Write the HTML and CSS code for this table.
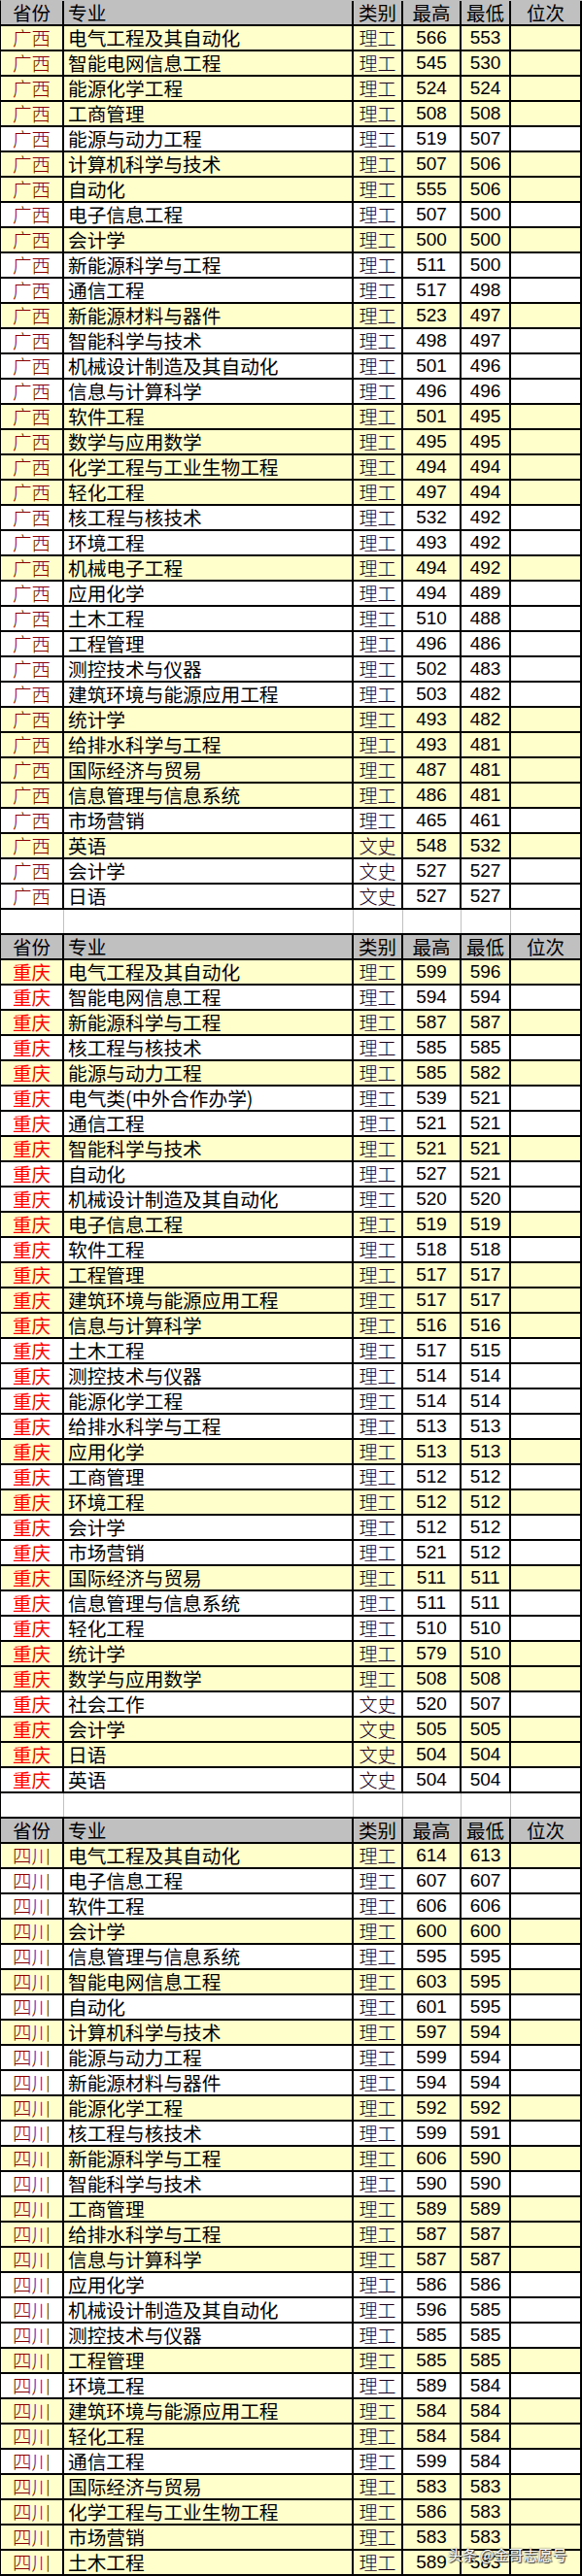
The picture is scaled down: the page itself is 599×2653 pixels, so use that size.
FILE: index.html
```html
<!DOCTYPE html>
<html lang="zh-CN">
<head>
<meta charset="utf-8">
<title>录取分数</title>
<link rel="stylesheet" href="styles.css">
</head>
<body>
<div class="sheet">
<div class="r h"><span class="c">省份</span><span class="m">专业</span><span class="c">类别</span><span class="c">最高</span><span class="c">最低</span><span class="c">位次</span></div>
<div class="r y"><span class="p gx">广西</span><span class="m">电气工程及其自动化</span><span class="t">理工</span><span class="n">566</span><span class="n">553</span><span class="n"></span></div>
<div class="r y"><span class="p gx">广西</span><span class="m">智能电网信息工程</span><span class="t">理工</span><span class="n">545</span><span class="n">530</span><span class="n"></span></div>
<div class="r y"><span class="p gx">广西</span><span class="m">能源化学工程</span><span class="t">理工</span><span class="n">524</span><span class="n">524</span><span class="n"></span></div>
<div class="r y"><span class="p gx">广西</span><span class="m">工商管理</span><span class="t">理工</span><span class="n">508</span><span class="n">508</span><span class="n"></span></div>
<div class="r"><span class="p gx">广西</span><span class="m">能源与动力工程</span><span class="t">理工</span><span class="n">519</span><span class="n">507</span><span class="n"></span></div>
<div class="r y"><span class="p gx">广西</span><span class="m">计算机科学与技术</span><span class="t">理工</span><span class="n">507</span><span class="n">506</span><span class="n"></span></div>
<div class="r y"><span class="p gx">广西</span><span class="m">自动化</span><span class="t">理工</span><span class="n">555</span><span class="n">506</span><span class="n"></span></div>
<div class="r"><span class="p gx">广西</span><span class="m">电子信息工程</span><span class="t">理工</span><span class="n">507</span><span class="n">500</span><span class="n"></span></div>
<div class="r y"><span class="p gx">广西</span><span class="m">会计学</span><span class="t">理工</span><span class="n">500</span><span class="n">500</span><span class="n"></span></div>
<div class="r"><span class="p gx">广西</span><span class="m">新能源科学与工程</span><span class="t">理工</span><span class="n">511</span><span class="n">500</span><span class="n"></span></div>
<div class="r"><span class="p gx">广西</span><span class="m">通信工程</span><span class="t">理工</span><span class="n">517</span><span class="n">498</span><span class="n"></span></div>
<div class="r y"><span class="p gx">广西</span><span class="m">新能源材料与器件</span><span class="t">理工</span><span class="n">523</span><span class="n">497</span><span class="n"></span></div>
<div class="r"><span class="p gx">广西</span><span class="m">智能科学与技术</span><span class="t">理工</span><span class="n">498</span><span class="n">497</span><span class="n"></span></div>
<div class="r"><span class="p gx">广西</span><span class="m">机械设计制造及其自动化</span><span class="t">理工</span><span class="n">501</span><span class="n">496</span><span class="n"></span></div>
<div class="r"><span class="p gx">广西</span><span class="m">信息与计算科学</span><span class="t">理工</span><span class="n">496</span><span class="n">496</span><span class="n"></span></div>
<div class="r y"><span class="p gx">广西</span><span class="m">软件工程</span><span class="t">理工</span><span class="n">501</span><span class="n">495</span><span class="n"></span></div>
<div class="r y"><span class="p gx">广西</span><span class="m">数学与应用数学</span><span class="t">理工</span><span class="n">495</span><span class="n">495</span><span class="n"></span></div>
<div class="r y"><span class="p gx">广西</span><span class="m">化学工程与工业生物工程</span><span class="t">理工</span><span class="n">494</span><span class="n">494</span><span class="n"></span></div>
<div class="r y"><span class="p gx">广西</span><span class="m">轻化工程</span><span class="t">理工</span><span class="n">497</span><span class="n">494</span><span class="n"></span></div>
<div class="r"><span class="p gx">广西</span><span class="m">核工程与核技术</span><span class="t">理工</span><span class="n">532</span><span class="n">492</span><span class="n"></span></div>
<div class="r"><span class="p gx">广西</span><span class="m">环境工程</span><span class="t">理工</span><span class="n">493</span><span class="n">492</span><span class="n"></span></div>
<div class="r y"><span class="p gx">广西</span><span class="m">机械电子工程</span><span class="t">理工</span><span class="n">494</span><span class="n">492</span><span class="n"></span></div>
<div class="r"><span class="p gx">广西</span><span class="m">应用化学</span><span class="t">理工</span><span class="n">494</span><span class="n">489</span><span class="n"></span></div>
<div class="r"><span class="p gx">广西</span><span class="m">土木工程</span><span class="t">理工</span><span class="n">510</span><span class="n">488</span><span class="n"></span></div>
<div class="r"><span class="p gx">广西</span><span class="m">工程管理</span><span class="t">理工</span><span class="n">496</span><span class="n">486</span><span class="n"></span></div>
<div class="r"><span class="p gx">广西</span><span class="m">测控技术与仪器</span><span class="t">理工</span><span class="n">502</span><span class="n">483</span><span class="n"></span></div>
<div class="r"><span class="p gx">广西</span><span class="m">建筑环境与能源应用工程</span><span class="t">理工</span><span class="n">503</span><span class="n">482</span><span class="n"></span></div>
<div class="r y"><span class="p gx">广西</span><span class="m">统计学</span><span class="t">理工</span><span class="n">493</span><span class="n">482</span><span class="n"></span></div>
<div class="r y"><span class="p gx">广西</span><span class="m">给排水科学与工程</span><span class="t">理工</span><span class="n">493</span><span class="n">481</span><span class="n"></span></div>
<div class="r y"><span class="p gx">广西</span><span class="m">国际经济与贸易</span><span class="t">理工</span><span class="n">487</span><span class="n">481</span><span class="n"></span></div>
<div class="r y"><span class="p gx">广西</span><span class="m">信息管理与信息系统</span><span class="t">理工</span><span class="n">486</span><span class="n">481</span><span class="n"></span></div>
<div class="r"><span class="p gx">广西</span><span class="m">市场营销</span><span class="t">理工</span><span class="n">465</span><span class="n">461</span><span class="n"></span></div>
<div class="r y"><span class="p gx">广西</span><span class="m">英语</span><span class="t">文史</span><span class="n">548</span><span class="n">532</span><span class="n"></span></div>
<div class="r"><span class="p gx">广西</span><span class="m">会计学</span><span class="t">文史</span><span class="n">527</span><span class="n">527</span><span class="n"></span></div>
<div class="r"><span class="p gx">广西</span><span class="m">日语</span><span class="t">文史</span><span class="n">527</span><span class="n">527</span><span class="n"></span></div>
<div class="r b"><span></span><span></span><span></span><span></span><span></span><span></span></div>
<div class="r h"><span class="c">省份</span><span class="m">专业</span><span class="c">类别</span><span class="c">最高</span><span class="c">最低</span><span class="c">位次</span></div>
<div class="r y"><span class="p cq">重庆</span><span class="m">电气工程及其自动化</span><span class="t">理工</span><span class="n">599</span><span class="n">596</span><span class="n"></span></div>
<div class="r"><span class="p cq">重庆</span><span class="m">智能电网信息工程</span><span class="t">理工</span><span class="n">594</span><span class="n">594</span><span class="n"></span></div>
<div class="r y"><span class="p cq">重庆</span><span class="m">新能源科学与工程</span><span class="t">理工</span><span class="n">587</span><span class="n">587</span><span class="n"></span></div>
<div class="r"><span class="p cq">重庆</span><span class="m">核工程与核技术</span><span class="t">理工</span><span class="n">585</span><span class="n">585</span><span class="n"></span></div>
<div class="r y"><span class="p cq">重庆</span><span class="m">能源与动力工程</span><span class="t">理工</span><span class="n">585</span><span class="n">582</span><span class="n"></span></div>
<div class="r"><span class="p cq">重庆</span><span class="m">电气类(中外合作办学)</span><span class="t">理工</span><span class="n">539</span><span class="n">521</span><span class="n"></span></div>
<div class="r"><span class="p cq">重庆</span><span class="m">通信工程</span><span class="t">理工</span><span class="n">521</span><span class="n">521</span><span class="n"></span></div>
<div class="r y"><span class="p cq">重庆</span><span class="m">智能科学与技术</span><span class="t">理工</span><span class="n">521</span><span class="n">521</span><span class="n"></span></div>
<div class="r"><span class="p cq">重庆</span><span class="m">自动化</span><span class="t">理工</span><span class="n">527</span><span class="n">521</span><span class="n"></span></div>
<div class="r"><span class="p cq">重庆</span><span class="m">机械设计制造及其自动化</span><span class="t">理工</span><span class="n">520</span><span class="n">520</span><span class="n"></span></div>
<div class="r y"><span class="p cq">重庆</span><span class="m">电子信息工程</span><span class="t">理工</span><span class="n">519</span><span class="n">519</span><span class="n"></span></div>
<div class="r"><span class="p cq">重庆</span><span class="m">软件工程</span><span class="t">理工</span><span class="n">518</span><span class="n">518</span><span class="n"></span></div>
<div class="r y"><span class="p cq">重庆</span><span class="m">工程管理</span><span class="t">理工</span><span class="n">517</span><span class="n">517</span><span class="n"></span></div>
<div class="r y"><span class="p cq">重庆</span><span class="m">建筑环境与能源应用工程</span><span class="t">理工</span><span class="n">517</span><span class="n">517</span><span class="n"></span></div>
<div class="r y"><span class="p cq">重庆</span><span class="m">信息与计算科学</span><span class="t">理工</span><span class="n">516</span><span class="n">516</span><span class="n"></span></div>
<div class="r"><span class="p cq">重庆</span><span class="m">土木工程</span><span class="t">理工</span><span class="n">517</span><span class="n">515</span><span class="n"></span></div>
<div class="r"><span class="p cq">重庆</span><span class="m">测控技术与仪器</span><span class="t">理工</span><span class="n">514</span><span class="n">514</span><span class="n"></span></div>
<div class="r"><span class="p cq">重庆</span><span class="m">能源化学工程</span><span class="t">理工</span><span class="n">514</span><span class="n">514</span><span class="n"></span></div>
<div class="r"><span class="p cq">重庆</span><span class="m">给排水科学与工程</span><span class="t">理工</span><span class="n">513</span><span class="n">513</span><span class="n"></span></div>
<div class="r y"><span class="p cq">重庆</span><span class="m">应用化学</span><span class="t">理工</span><span class="n">513</span><span class="n">513</span><span class="n"></span></div>
<div class="r"><span class="p cq">重庆</span><span class="m">工商管理</span><span class="t">理工</span><span class="n">512</span><span class="n">512</span><span class="n"></span></div>
<div class="r y"><span class="p cq">重庆</span><span class="m">环境工程</span><span class="t">理工</span><span class="n">512</span><span class="n">512</span><span class="n"></span></div>
<div class="r"><span class="p cq">重庆</span><span class="m">会计学</span><span class="t">理工</span><span class="n">512</span><span class="n">512</span><span class="n"></span></div>
<div class="r"><span class="p cq">重庆</span><span class="m">市场营销</span><span class="t">理工</span><span class="n">521</span><span class="n">512</span><span class="n"></span></div>
<div class="r y"><span class="p cq">重庆</span><span class="m">国际经济与贸易</span><span class="t">理工</span><span class="n">511</span><span class="n">511</span><span class="n"></span></div>
<div class="r"><span class="p cq">重庆</span><span class="m">信息管理与信息系统</span><span class="t">理工</span><span class="n">511</span><span class="n">511</span><span class="n"></span></div>
<div class="r"><span class="p cq">重庆</span><span class="m">轻化工程</span><span class="t">理工</span><span class="n">510</span><span class="n">510</span><span class="n"></span></div>
<div class="r y"><span class="p cq">重庆</span><span class="m">统计学</span><span class="t">理工</span><span class="n">579</span><span class="n">510</span><span class="n"></span></div>
<div class="r y"><span class="p cq">重庆</span><span class="m">数学与应用数学</span><span class="t">理工</span><span class="n">508</span><span class="n">508</span><span class="n"></span></div>
<div class="r"><span class="p cq">重庆</span><span class="m">社会工作</span><span class="t">文史</span><span class="n">520</span><span class="n">507</span><span class="n"></span></div>
<div class="r y"><span class="p cq">重庆</span><span class="m">会计学</span><span class="t">文史</span><span class="n">505</span><span class="n">505</span><span class="n"></span></div>
<div class="r y"><span class="p cq">重庆</span><span class="m">日语</span><span class="t">文史</span><span class="n">504</span><span class="n">504</span><span class="n"></span></div>
<div class="r"><span class="p cq">重庆</span><span class="m">英语</span><span class="t">文史</span><span class="n">504</span><span class="n">504</span><span class="n"></span></div>
<div class="r b"><span></span><span></span><span></span><span></span><span></span><span></span></div>
<div class="r h"><span class="c">省份</span><span class="m">专业</span><span class="c">类别</span><span class="c">最高</span><span class="c">最低</span><span class="c">位次</span></div>
<div class="r y"><span class="p sc">四川</span><span class="m">电气工程及其自动化</span><span class="t">理工</span><span class="n">614</span><span class="n">613</span><span class="n"></span></div>
<div class="r"><span class="p sc">四川</span><span class="m">电子信息工程</span><span class="t">理工</span><span class="n">607</span><span class="n">607</span><span class="n"></span></div>
<div class="r"><span class="p sc">四川</span><span class="m">软件工程</span><span class="t">理工</span><span class="n">606</span><span class="n">606</span><span class="n"></span></div>
<div class="r y"><span class="p sc">四川</span><span class="m">会计学</span><span class="t">理工</span><span class="n">600</span><span class="n">600</span><span class="n"></span></div>
<div class="r"><span class="p sc">四川</span><span class="m">信息管理与信息系统</span><span class="t">理工</span><span class="n">595</span><span class="n">595</span><span class="n"></span></div>
<div class="r y"><span class="p sc">四川</span><span class="m">智能电网信息工程</span><span class="t">理工</span><span class="n">603</span><span class="n">595</span><span class="n"></span></div>
<div class="r"><span class="p sc">四川</span><span class="m">自动化</span><span class="t">理工</span><span class="n">601</span><span class="n">595</span><span class="n"></span></div>
<div class="r y"><span class="p sc">四川</span><span class="m">计算机科学与技术</span><span class="t">理工</span><span class="n">597</span><span class="n">594</span><span class="n"></span></div>
<div class="r"><span class="p sc">四川</span><span class="m">能源与动力工程</span><span class="t">理工</span><span class="n">599</span><span class="n">594</span><span class="n"></span></div>
<div class="r"><span class="p sc">四川</span><span class="m">新能源材料与器件</span><span class="t">理工</span><span class="n">594</span><span class="n">594</span><span class="n"></span></div>
<div class="r y"><span class="p sc">四川</span><span class="m">能源化学工程</span><span class="t">理工</span><span class="n">592</span><span class="n">592</span><span class="n"></span></div>
<div class="r"><span class="p sc">四川</span><span class="m">核工程与核技术</span><span class="t">理工</span><span class="n">599</span><span class="n">591</span><span class="n"></span></div>
<div class="r y"><span class="p sc">四川</span><span class="m">新能源科学与工程</span><span class="t">理工</span><span class="n">606</span><span class="n">590</span><span class="n"></span></div>
<div class="r"><span class="p sc">四川</span><span class="m">智能科学与技术</span><span class="t">理工</span><span class="n">590</span><span class="n">590</span><span class="n"></span></div>
<div class="r y"><span class="p sc">四川</span><span class="m">工商管理</span><span class="t">理工</span><span class="n">589</span><span class="n">589</span><span class="n"></span></div>
<div class="r y"><span class="p sc">四川</span><span class="m">给排水科学与工程</span><span class="t">理工</span><span class="n">587</span><span class="n">587</span><span class="n"></span></div>
<div class="r y"><span class="p sc">四川</span><span class="m">信息与计算科学</span><span class="t">理工</span><span class="n">587</span><span class="n">587</span><span class="n"></span></div>
<div class="r"><span class="p sc">四川</span><span class="m">应用化学</span><span class="t">理工</span><span class="n">586</span><span class="n">586</span><span class="n"></span></div>
<div class="r"><span class="p sc">四川</span><span class="m">机械设计制造及其自动化</span><span class="t">理工</span><span class="n">596</span><span class="n">585</span><span class="n"></span></div>
<div class="r"><span class="p sc">四川</span><span class="m">测控技术与仪器</span><span class="t">理工</span><span class="n">585</span><span class="n">585</span><span class="n"></span></div>
<div class="r y"><span class="p sc">四川</span><span class="m">工程管理</span><span class="t">理工</span><span class="n">585</span><span class="n">585</span><span class="n"></span></div>
<div class="r"><span class="p sc">四川</span><span class="m">环境工程</span><span class="t">理工</span><span class="n">589</span><span class="n">584</span><span class="n"></span></div>
<div class="r y"><span class="p sc">四川</span><span class="m">建筑环境与能源应用工程</span><span class="t">理工</span><span class="n">584</span><span class="n">584</span><span class="n"></span></div>
<div class="r y"><span class="p sc">四川</span><span class="m">轻化工程</span><span class="t">理工</span><span class="n">584</span><span class="n">584</span><span class="n"></span></div>
<div class="r"><span class="p sc">四川</span><span class="m">通信工程</span><span class="t">理工</span><span class="n">599</span><span class="n">584</span><span class="n"></span></div>
<div class="r y"><span class="p sc">四川</span><span class="m">国际经济与贸易</span><span class="t">理工</span><span class="n">583</span><span class="n">583</span><span class="n"></span></div>
<div class="r y"><span class="p sc">四川</span><span class="m">化学工程与工业生物工程</span><span class="t">理工</span><span class="n">586</span><span class="n">583</span><span class="n"></span></div>
<div class="r y"><span class="p sc">四川</span><span class="m">市场营销</span><span class="t">理工</span><span class="n">583</span><span class="n">583</span><span class="n"></span></div>
<div class="r y"><span class="p sc">四川</span><span class="m">土木工程</span><span class="t">理工</span><span class="n">589</span><span class="n">583</span><span class="n"></span></div>
<div class="mark">头条 @金哥志愿号</div>
</div>
</body>
</html>
```
FILE: styles.css
```css
html, body {
  margin: 0;
  padding: 0;
  background: #ffffff;
}

.sheet {
  position: relative;
  width: 599px;
  box-sizing: border-box;
  border-top: 1px solid #c0c0c0;
  border-left: 1px solid #000000;
  font-family: "Noto Sans CJK SC", "Liberation Sans", sans-serif;
  color: #000000;
}

.r {
  display: grid;
  grid-template-columns: 65px 298px 51px 60px 51px 73px;
  height: 26px;
  box-sizing: border-box;
  border-bottom: 2px solid #000000;
  background: #ffffff;
}

.r.y {
  background: #ffffcc;
}

.r.h {
  background: #c0c0c0;
}

.r > span {
  box-sizing: border-box;
  border-right: 2px solid #000000;
  height: 24px;
  line-height: 24px;
  white-space: nowrap;
}

.r.b > span {
  border-right: 1px solid #c0c0c0;
}

.r.b > span:last-child {
  border-right: 2px solid #000000;
}

.c {
  text-align: center;
  font-size: 19.5px;
}

.m {
  padding-left: 4px;
  font-size: 19.7px;
}

.p {
  text-align: center;
  font-size: 19.5px;
  font-weight: 300;
}

.gx, .sc {
  color: #8a0000;
}

.cq {
  color: #ff0000;
  font-weight: 400;
}

.t {
  text-align: center;
  font-size: 19px;
  font-weight: 300;
  color: #1c001c;
}

.n {
  text-align: center;
  font-family: "Liberation Sans", Arial, sans-serif;
  font-size: 19px;
}

.mark {
  position: absolute;
  left: 460px;
  top: 2621px;
  font-size: 15px;
  line-height: 18px;
  color: #ffffff;
  white-space: nowrap;
  text-shadow: 0 0 2px #333333, 1px 1px 1px #333333;
}
```
